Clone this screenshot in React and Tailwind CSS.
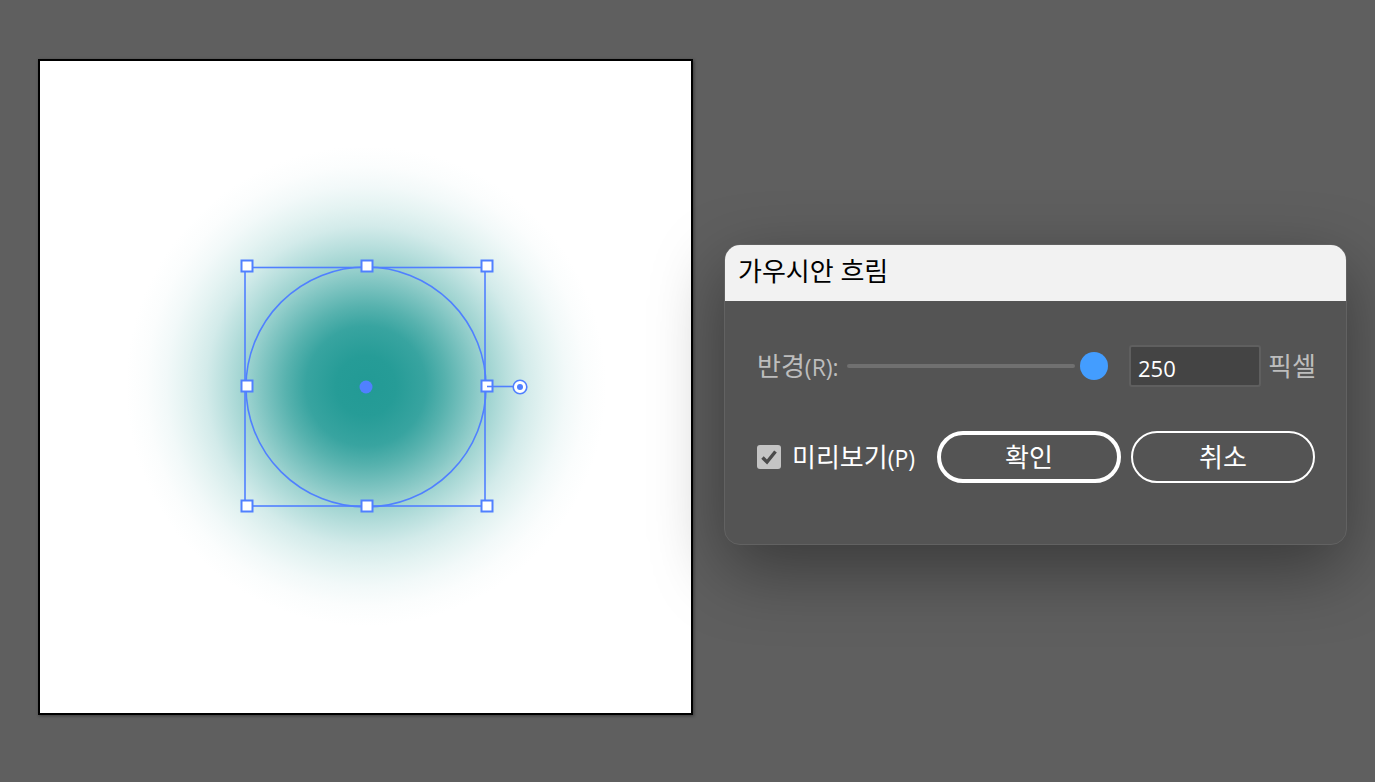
const FONT = "font-['Open_Sans','Noto_Sans_CJK_KR',sans-serif]";

const HANDLES = [
  [247, 266], [367, 266], [487, 266],
  [247, 386], [487, 386],
  [247, 506], [367, 506], [487, 506],
];

// artboard drawing, coordinates are page px minus the artboard origin
function Blur() {
  return (
    <svg width="651" height="652" viewBox="40 61 651 652" className="block">
      <defs>
        <radialGradient id="blur" gradientUnits="userSpaceOnUse" cx="366" cy="386" r="240">
          <stop offset="0" stopColor="#229a95" />
          <stop offset="0.125" stopColor="#269c97" />
          <stop offset="0.25" stopColor="#38a4a0" />
          <stop offset="0.333" stopColor="#57b2ae" />
          <stop offset="0.417" stopColor="#7ac2bf" />
          <stop offset="0.5" stopColor="#9cd2cf" />
          <stop offset="0.583" stopColor="#b8dfdd" />
          <stop offset="0.667" stopColor="#d3ebea" />
          <stop offset="0.75" stopColor="#e4f3f2" />
          <stop offset="0.833" stopColor="#f2f9f9" />
          <stop offset="0.917" stopColor="#fbfdfd" />
          <stop offset="1" stopColor="#ffffff" />
        </radialGradient>
      </defs>
      <rect x="40" y="61" width="651" height="652" fill="url(#blur)" />
      <g fill="none" stroke="#5080ff" strokeWidth="1.6">
        <rect x="245" y="267.5" width="240" height="238.5" />
        <circle cx="366" cy="387" r="120" />
        <line x1="487" y1="386.5" x2="514" y2="386.5" />
      </g>
      {HANDLES.map(([x, y]) => (
        <rect key={`${x}-${y}`} x={x - 5.5} y={y - 5.5} width="11" height="11" fill="#fff" stroke="#5080ff" strokeWidth="2" />
      ))}
      <line x1="487" y1="386.5" x2="493" y2="386.5" stroke="#5080ff" strokeWidth="1.6" />
      <circle cx="366" cy="387" r="6.5" fill="#5080ff" />
      <circle cx="520" cy="387" r="6.8" fill="#fff" stroke="#5080ff" strokeWidth="1.6" />
      <circle cx="520" cy="387" r="3" fill="#5080ff" />
    </svg>
  );
}

function Dialog() {
  return (
    <div className={`${FONT} ml-[31px] mt-[244px] w-[623px] h-[301px] shrink-0 rounded-[16px] overflow-hidden border border-[#626262] bg-[#545454] shadow-[0_24px_70px_rgba(0,0,0,0.4)]`}>
      <div className="h-[56px] bg-[#f2f2f2] pl-[13px] pt-[8px] text-[26px] leading-[36px] text-black whitespace-nowrap">가우시안 흐림</div>

      <div className="flex items-center h-[40px] mt-[45px] pl-[32px]">
        <span className="w-[90px] text-[26px] text-[#bdbdbd] whitespace-nowrap">반경<span className="text-[23px]">(R):</span></span>
        <div className="w-[228px] h-[4px] bg-[#707070] rounded-full" />
        <div className="w-[28px] h-[28px] ml-[5px] rounded-full bg-[#439dff]" />
        <div className="w-[132px] h-[42px] ml-[21px] pl-[7px] pt-[4px] rounded-[3px] border-2 border-[#5f5f5f] bg-[#444444] text-[22px] leading-[34px] text-white">250</div>
        <span className="ml-[7px] text-[26px] text-[#bdbdbd] whitespace-nowrap">픽셀</span>
      </div>

      <div className="flex items-center mt-[45px] pl-[32px]">
        <div className="flex items-center justify-center w-[24px] h-[24px] rounded-[3px] bg-[#c4c4c4]">
          <svg width="20" height="20" viewBox="0 0 20 20" fill="none" stroke="#4a4a4a" strokeWidth="3.4">
            <path d="M3.5 10.5 L8 15 L16.5 4.5" />
          </svg>
        </div>
        <span className="ml-[11px] w-[145px] text-[26px] text-white whitespace-nowrap">미리보기<span className="text-[23px]">(P)</span></span>
        <button className="w-[184px] h-[52px] rounded-full border-4 border-white text-[26px] text-white">확인</button>
        <button className="w-[184px] h-[52px] ml-[10px] rounded-full border-2 border-white text-[26px] text-white">취소</button>
      </div>
    </div>
  );
}

export default function App() {
  return (
    <div className="flex w-[1375px] h-[782px] overflow-hidden bg-[#5f5f5f]">
      <div className="ml-[38px] mt-[59px] w-[655px] h-[656px] shrink-0 border-2 border-black bg-white shadow-[1px_1px_3px_rgba(0,0,0,0.4)]">
        <Blur />
      </div>
      <Dialog />
    </div>
  );
}
